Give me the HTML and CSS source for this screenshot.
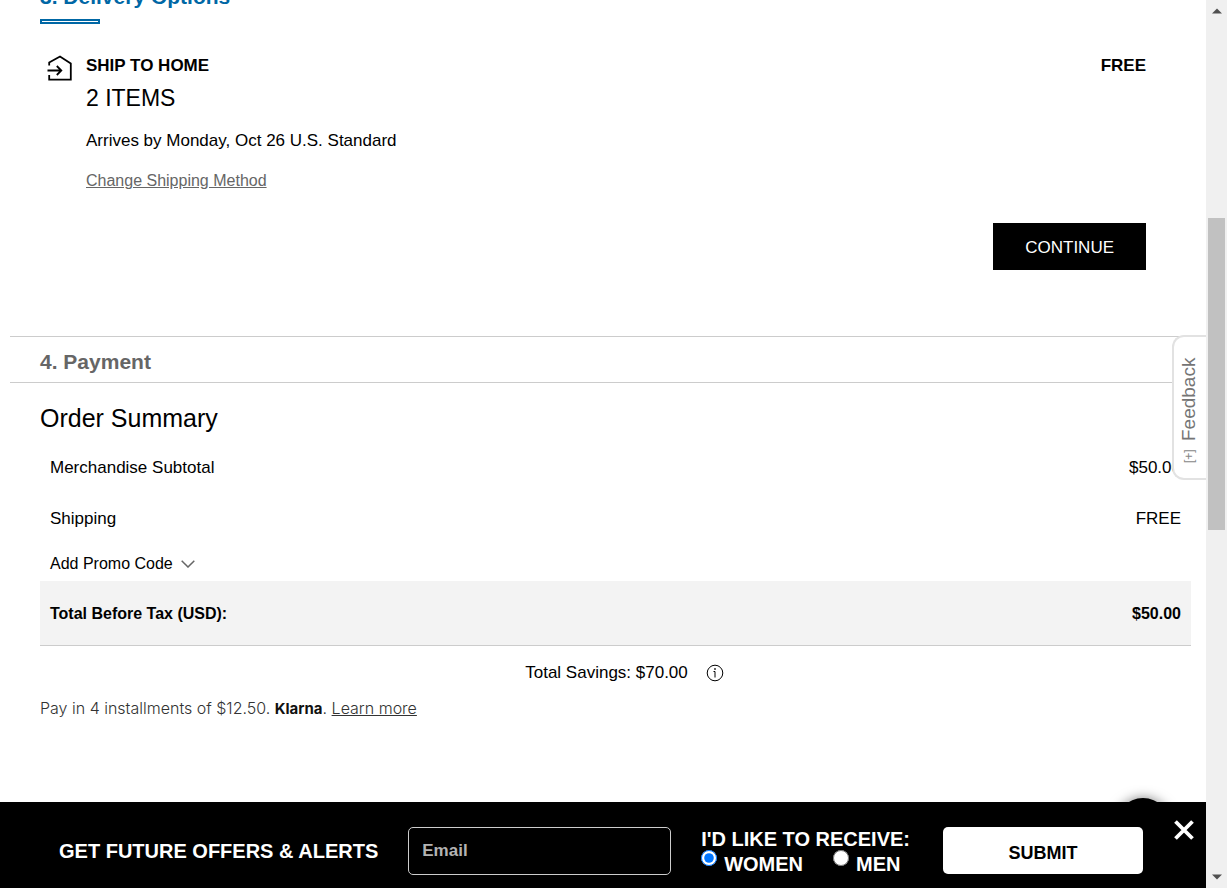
FILE: index.html
```html
<!DOCTYPE html>
<html lang="en">
<head>
<meta charset="utf-8">
<meta name="viewport" content="width=device-width, initial-scale=1">
<title>Checkout</title>
<link rel="stylesheet" href="styles.css">
</head>
<body>
<div class="viewport">
  <div class="page">
    <main class="checkout">
      <section class="delivery">
        <h2 class="step-title step-title-active">3. Delivery Options</h2>
        <div class="step-rule"></div>
        <div class="shipment">
          <svg class="home-icon" viewBox="0 0 26 28" fill="none" stroke="#000" stroke-width="1.800" aria-hidden="true">
            <path d="M2.200 10.500V7.500L13 1.500L23.800 8.500V24.600H2.200V20"/>
            <path d="M.5 15.500H14M9.800 11L14.300 15.500L9.800 20"/>
          </svg>
          <div class="shipment-info">
            <div class="shipment-head"><h3 class="strong">SHIP TO HOME</h3><span class="strong">FREE</span></div>
            <p class="items">2 ITEMS</p>
            <p class="arrival">Arrives by Monday, Oct 26 U.S. Standard</p>
            <a class="change" href="#">Change Shipping Method</a>
          </div>
        </div>
        <button class="continue" type="button">CONTINUE</button>
      </section>
      <section class="payment"><h2 class="step-title">4. Payment</h2></section>
      <section class="summary">
        <h2 class="summary-title">Order Summary</h2>
        <table class="costs">
          <tbody>
            <tr><th scope="row">Merchandise Subtotal</th><td>$50.00</td></tr>
            <tr><th scope="row">Shipping</th><td>FREE</td></tr>
            <tr class="promo-row"><td colspan="2">
              <button class="promo" type="button">Add Promo Code
                <svg class="chevron" viewBox="0 0 14 8" fill="none" stroke="#666" stroke-width="1.500" aria-hidden="true"><path d="M.7 .7L7 7L13.300 .7"/></svg>
              </button></td></tr>
            <tr class="total"><th scope="row">Total Before Tax (USD):</th><td>$50.00</td></tr>
          </tbody>
        </table>
        <p class="savings">Total Savings: $70.00
          <svg class="info" viewBox="0 0 18 18" fill="none" stroke="#000" aria-hidden="true"><circle cx="9" cy="9" r="7.800"/><path d="M7.500 7.500H9V13.500"/><path d="M8.200 5H9.800" stroke-width="1.500"/></svg>
        </p>
        <p class="klarna">Pay in 4 installments of $12.50. <b>Klarna</b>. <a href="#">Learn more</a></p>
      </section>
      <button class="feedback" type="button"><span class="feedback-mark">[+]</span><span>Feedback</span></button>
    </main>
    <div class="chat-bubble"></div>
    <form class="signup">
      <label class="signup-title" for="email">GET FUTURE OFFERS &amp; ALERTS</label>
      <input class="email" id="email" type="email" placeholder="Email">
      <fieldset class="receive">
        <legend>I'D LIKE TO RECEIVE:</legend>
        <div class="choices">
          <label><input type="radio" name="list" checked>WOMEN</label>
          <label><input type="radio" name="list">MEN</label>
        </div>
      </fieldset>
      <button class="submit" type="submit">SUBMIT</button>
      <button class="close" type="button" aria-label="Close">
        <svg viewBox="0 0 20 20" fill="none" stroke="#fff" stroke-width="3.800" aria-hidden="true"><path d="M1.500 1.500L18.500 18.500M18.500 1.500L1.500 18.500"/></svg>
      </button>
    </form>
  </div>
  <div class="scrollbar" aria-hidden="true">
    <svg class="arrow" viewBox="0 0 10 6"><path d="M0 5.500L5 .5L10 5.500Z" fill="#505050"/></svg>
    <div class="track"><div class="thumb"></div></div>
    <svg class="arrow" viewBox="0 0 10 6"><path d="M0 .5L5 5.500L10 .5Z" fill="#505050"/></svg>
  </div>
</div>
</body>
</html>
```
FILE: styles.css
```css
* { box-sizing: border-box; }
body { margin: 0; background: #fff; color: #000; font: 17px/20px "Liberation Sans", Arial, sans-serif; }
h2, h3, p { margin: 0; }
button, input { font: inherit; }
button { cursor: pointer; }

.viewport { display: flex; height: 100vh; overflow: hidden; }
.page { position: relative; flex: 1; min-width: 0; display: flex; flex-direction: column; }
.checkout { flex: 1; min-height: 0; overflow: hidden; }

/* the page is scrolled part of the way past the delivery heading */
.delivery { display: flex; flex-direction: column; margin-top: -15px; padding: 0 60px 66px 40px; }
.step-title { font-size: 21px; line-height: 24px; font-weight: bold; color: #666; }
.step-title-active { color: #0067a5; }
.step-rule { width: 60px; height: 5px; margin-top: 10px; border: 2px solid #0067a5; }
.shipment { display: flex; gap: 13px; margin-top: 31px; padding-left: 7px; }
.home-icon { width: 26px; height: 28px; flex: none; }
.shipment-info { flex: 1; padding-top: 1px; }
.shipment-head { display: flex; justify-content: space-between; }
.strong { font-size: 17px; font-weight: bold; }
.items { margin-top: 8px; font-size: 23px; line-height: 28px; }
.arrival { margin-top: 19px; }
.change { display: block; width: max-content; margin-top: 20px; font-size: 16px; color: #666; }
.continue { align-self: flex-end; height: 47px; margin-top: 32px; padding: 2px 32px 0; border: 0; background: #000; color: #fff; }

.payment { margin-left: 10px; padding: 13px 30px 8px; border-top: 1px solid #ccc; border-bottom: 1px solid #ccc; height: 47px; }

.summary { padding: 20px 15px 0 40px; }
.summary-title { font-size: 25px; line-height: 30px; font-weight: normal; }
.costs { width: 100%; margin-top: 9px; border-collapse: collapse; }
.costs th { padding: 0 10px; text-align: left; font-weight: normal; }
.costs td { padding: 0 10px; text-align: right; }
.costs tr { height: 51px; }
.costs .promo-row { height: 37px; }
.costs .promo-row td { text-align: left; vertical-align: top; }
.promo { display: flex; align-items: center; gap: 8px; margin-top: 10px; padding: 0; border: 0; background: none; color: #000; font-size: 16px; }
.chevron { width: 14px; height: 8px; }
.costs .total { height: 64px; background: #f3f3f3; border-bottom: 1px solid #ccc; font-size: 16px; }
.costs .total th, .costs .total td { padding-top: 2px; font-weight: bold; }
.savings { display: flex; justify-content: center; align-items: center; gap: 18px; margin-top: 17px; padding-left: 18px; }
.info { width: 18px; height: 18px; }
.klarna { margin-top: 15px; font-family: Inter, sans-serif; font-size: 16px; font-weight: 300; color: #333; }
.klarna b { font-size: 15px; font-weight: 700; color: #111; }
.klarna a { color: #333; }

.feedback { position: absolute; right: 0; top: 335px; width: 34px; height: 145px; display: flex; justify-content: center; align-items: center; gap: 8px; padding: 0 2px 5px 0; writing-mode: vertical-rl; transform: rotate(180deg); border: 2px solid #e2e2e2; border-left: 0; border-radius: 0 12px 12px 0; background: #fff; color: #757575; font-size: 19px; }
.page .feedback { padding: 0 0 5px 3px; }
.feedback-mark { font-size: 12px; color: #888; }

.chat-bubble { position: absolute; right: 35px; bottom: 34px; width: 56px; height: 56px; border-radius: 50%; background: #000; box-shadow: 0 0 12px rgba(0, 0, 0, .5); }

.signup { position: relative; display: flex; align-items: flex-start; gap: 30px; height: 86px; padding: 25px 63px 0 59px; background: #000; color: #fff; font-size: 20px; line-height: 25px; font-weight: bold; }
.signup-title { line-height: 48px; }
.email { flex: 1; min-width: 0; height: 48px; padding: 0 13px; border: 1px solid #ccc; border-radius: 5px; background: #000; color: #fff; font-size: 17px; font-weight: bold; }
.email::placeholder { color: #b3b3b3; opacity: 1; }
.receive { min-width: 0; margin: 0; padding: 0 3px 0 0; border: 0; }
.receive legend { padding: 0; }
.choices { display: flex; gap: 30px; }
.choices label { display: flex; align-items: flex-start; gap: 7px; }
.choices input { width: 16px; height: 16px; margin: -2px 0 0; accent-color: #0075ff; }
.submit { width: 200px; height: 47px; padding: 5px 0 0; border: 0; border-radius: 5px; background: #fff; color: #000; font-size: 18px; font-weight: bold; }
.close { position: absolute; right: 12px; top: 18px; width: 20px; height: 20px; padding: 0; border: 0; background: none; }
.close svg { display: block; width: 20px; height: 20px; }

.scrollbar { display: flex; flex-direction: column; align-items: center; width: 21px; padding: 8px 0; background: #f0f0f0; }
.arrow { width: 10px; height: 6px; flex: none; }
.track { flex: 1; width: 17px; display: flex; flex-direction: column; }
.track::before { content: ""; flex: 204; }
.thumb { flex: 312; background: #c1c1c1; }
.track::after { content: ""; flex: 344; }
```
